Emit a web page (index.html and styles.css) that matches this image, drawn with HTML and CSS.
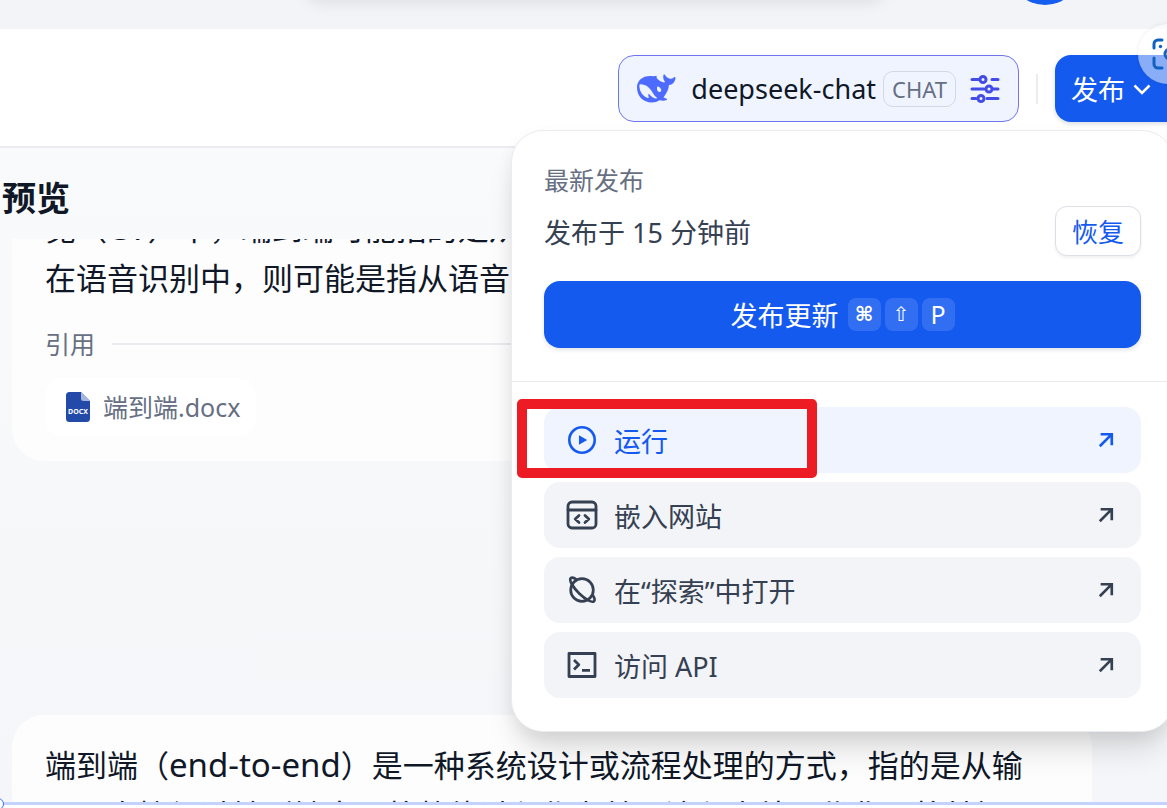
FILE: index.html
```html
<!DOCTYPE html>
<html lang="zh-CN">
<head>
    <meta charset="UTF-8">
    <meta name="viewport" content="width=device-width, initial-scale=1.0">
    <title>调试与预览</title>
    <link rel="stylesheet" href="styles.css">
</head>
<body>

<div class="topbar">
    <div class="topbar-tabs"></div>
    <div class="avatar"></div>
</div>

<header class="header">
    <button class="model" type="button">
        <svg class="model-logo" viewBox="0 0 40 32" aria-hidden="true">
            <path fill="#4d6bfe" fill-rule="evenodd" d="M39 4c-.6-.3-.9.3-1.3.6-1.2 1.3-2.800 1.500-4.400 1C31.500 5 30.300 4 29 2c-.4-.7-1-1-1.300-.4-.9 1.800-.6 4.700.9 6.600.5.7.2 1.300-.4 1.200-2.700-.3-4.700-1.600-6.700-3.400-.8-.7-1.200-1.500-.7-2.400.2-.4-.5-.7-1-.5-1.500.2-3 .2-4.500-.1C6.500 2.500 1 7.500 1 14.500 1 23 7 29.500 16 29.500c2.800 0 5.300-.8 7.400-2.200 2 .4 4.500.7 6.800 0 1.300-.5 1.200-1.200.3-1.500-1.300-.5-2.300-.8-3-1.500 3-3.600 5-7.500 5.500-12.300 3.500 0 6-3 6.500-7 .1-.5 0-.8-.5-1zM19.500 25.500c-2-.2-4-1.800-5.500-3.500-.7-.9-1.500-1.300-1.700-.6-.3 1 .8 2.600.3 3.300-.4.5-1.600.1-2.600-.4C5.500 21.500 3.400 17.500 3.400 12.500c0-.8.300-1.200 1.200-1.200 5.400.1 9.100 3.500 11.500 7.500 1.400 2.300 2.700 4.700 4.700 5.700.6.4-.2 1.100-1.300 1zM23 19c-1.800-.8-2.200-2.300-2-4.500.1-1.200 1.300-1.300 2.200-.5 1.300 1.200 2.600 2.600 1.900 4-.4 1-1.300 1.300-2.100 1z"/>
        </svg>
        <span class="model-name">deepseek-chat</span>
        <span class="model-tag">CHAT</span>
        <svg class="model-settings" viewBox="0 0 30 30" fill="none" stroke="#444ce7" stroke-width="3" stroke-linecap="round" aria-hidden="true">
            <path d="M2 5.500h7M22 5.500h6M2 15h12M23 15h5M2 24.500h4M17 24.500h11"/>
            <circle cx="13" cy="5.500" r="3"/>
            <circle cx="19" cy="15" r="3"/>
            <circle cx="11" cy="24.500" r="3"/>
        </svg>
    </button>
    <span class="header-divider"></span>
    <button class="publish" type="button">
        发布
        <svg class="publish-arrow" viewBox="0 0 18 18" fill="none" stroke="#fff" stroke-width="2.500" aria-hidden="true">
            <path d="M1.500 5.500L9 13l7.500-7.500"/>
        </svg>
    </button>

    <section class="popover">
        <div class="popover-top">
            <p class="popover-label">最新发布</p>
            <div class="popover-row">
                <span>发布于 15 分钟前</span>
                <button class="restore" type="button">恢复</button>
            </div>
            <button class="update" type="button">
                <span>发布更新</span>
                <span class="keys"><kbd>⌘</kbd><kbd>⇧</kbd><kbd>P</kbd></span>
            </button>
        </div>
        <nav class="actions">
            <a class="action active" href="#run">
                <svg class="action-icon" viewBox="0 0 32 32" fill="none" stroke="currentColor" stroke-width="2.600" aria-hidden="true">
                    <circle cx="16" cy="16" r="12.700"/>
                    <path d="M13 11.200v9.600l8.200-4.800z" fill="currentColor" stroke="none"/>
                </svg>
                <span>运行</span>
                <svg class="action-arrow" viewBox="0 0 18 18" fill="none" stroke="currentColor" stroke-width="3" aria-hidden="true"><path d="M2 16L15 3M3 2.500h12.500V15"/></svg>
            </a>
            <a class="action" href="#embed">
                <svg class="action-icon" viewBox="0 0 32 32" fill="none" stroke="currentColor" stroke-width="2.800" stroke-linecap="round" stroke-linejoin="round" aria-hidden="true">
                    <rect x="2" y="3" width="28" height="26" rx="4"/>
                    <path d="M2 11h28M13 16.500l-3.800 3.500 3.800 3.500M19 16.500l3.800 3.500-3.800 3.500"/>
                </svg>
                <span>嵌入网站</span>
                <svg class="action-arrow" viewBox="0 0 18 18" fill="none" stroke="currentColor" stroke-width="3" aria-hidden="true"><path d="M2 16L15 3M3 2.500h12.500V15"/></svg>
            </a>
            <a class="action" href="#explore">
                <svg class="action-icon" viewBox="0 0 32 32" fill="none" stroke="currentColor" stroke-width="2.700" aria-hidden="true">
                    <circle cx="16" cy="16" r="11.300"/>
                    <path d="M10.500 5.500C8 3.600 5.500 3.300 4.600 4.400 3 6.500 7 13.500 13.500 19.800 19.500 25.600 26 29 28 27.200c1-1 .5-3.500-1.500-6.500"/>
                </svg>
                <span>在“探索”中打开</span>
                <svg class="action-arrow" viewBox="0 0 18 18" fill="none" stroke="currentColor" stroke-width="3" aria-hidden="true"><path d="M2 16L15 3M3 2.500h12.500V15"/></svg>
            </a>
            <a class="action" href="#api">
                <svg class="action-icon" viewBox="0 0 32 32" fill="none" stroke="currentColor" stroke-width="2.800" stroke-linejoin="round" aria-hidden="true">
                    <rect x="3" y="4.500" width="26" height="23"/>
                    <path d="M8 11l4.800 4.800L8 20.600M16 21.300h8"/>
                </svg>
                <span>访问 API</span>
                <svg class="action-arrow" viewBox="0 0 18 18" fill="none" stroke="currentColor" stroke-width="3" aria-hidden="true"><path d="M2 16L15 3M3 2.500h12.500V15"/></svg>
            </a>
        </nav>
        <div class="highlight"></div>
    </section>
</header>

<main class="preview">
    <h1 class="preview-title"><span>调试与预览</span></h1>
    <div class="chat">
        <article class="message first">
            <p>觉（<span class="latin">CV</span>）中，端到端可能指的是从<br>在语音识别中，则可能是指从语音</p>
            <h2 class="citation">引用</h2>
            <a class="file" href="#file">
                <svg class="file-icon" viewBox="0 0 24 30" aria-hidden="true">
                    <path fill="#2349a9" d="M3.500 0H15l9 9v17.500a3.500 3.500 0 0 1-3.500 3.500h-17A3.500 3.500 0 0 1 0 26.500v-23A3.500 3.500 0 0 1 3.500 0z"/>
                    <path fill="#a7b6dd" d="M15 0l9 9h-6.500A2.500 2.500 0 0 1 15 6.500z"/>
                    <text x="12" y="22" class="file-type">DOCX</text>
                </svg>
                端到端.docx
            </a>
        </article>
        <article class="message">
            <p>端到端（<span class="latin">end-to-end</span>）是一种系统设计或流程处理的方式，指的是从输<br>入，直接经过转到输出，将整体过程作为单一流程来处理优化，将其视</p>
        </article>
    </div>
</main>

<button class="capture" type="button" aria-label="截图">
    <svg viewBox="0 0 32 32" fill="none" stroke="#0f62c0" stroke-width="3" stroke-linecap="round" aria-hidden="true">
        <path d="M2 10V6a4 4 0 0 1 4-4h4M2 20v6a4 4 0 0 0 4 4h4M22 2h4a4 4 0 0 1 4 4v4"/>
        <circle cx="18" cy="16" r="5"/>
        <circle cx="8.500" cy="8.500" r="1.700" fill="#0f62c0" stroke="none"/>
    </svg>
</button>
<div class="selection-edge"></div>

</body>
</html>
```
FILE: styles.css
```css
* {
    box-sizing: border-box;
}
body {
    margin: 0;
    height: 100vh;
    display: flex;
    flex-direction: column;
    position: relative;
    overflow: hidden;
    background-color: #f8f9fb;
    color: #101828;
    font-family: "Noto Sans", "Noto Sans CJK SC", sans-serif;
}
p, h1, h2 {
    margin: 0;
    font-weight: 400;
}
button {
    font-family: inherit;
    cursor: pointer;
}
svg {
    display: block;
    flex: none;
}

/* Top bar */
.topbar {
    flex: none;
    height: 29px;
    position: relative;
    overflow: hidden;
    background-color: #f2f4f7;
}
.topbar-tabs {
    position: absolute;
    top: -42px;
    left: 26%;
    right: 24%;
    height: 40px;
    border-radius: 20px;
    box-shadow: 0 4px 16px rgba(16, 24, 40, 0.1);
}
.avatar {
    position: absolute;
    top: -67px;
    right: 86px;
    width: 72px;
    height: 72px;
    border-radius: 50%;
    background-color: #155eef;
}

/* Header */
.header {
    flex: none;
    height: 119px;
    position: relative;
    z-index: 1;
    display: flex;
    align-items: center;
    justify-content: flex-end;
    padding-top: 2px;
    background-color: #fff;
    border-bottom: 2px solid #eaecf0;
}
.model {
    height: 67px;
    display: flex;
    align-items: center;
    padding: 0 18px 0 17px;
    border: 1px solid #6f76ed;
    border-radius: 16px;
    background-color: #eff4ff;
    color: #101828;
}
.model-logo {
    width: 40px;
    height: 32px;
    margin-right: 15px;
}
.model-name {
    font-size: 27px;
}
.model-tag {
    margin: 0 14px 0 7px;
    padding: 0 8px;
    border: 1px solid #d3d8e2;
    border-radius: 10px;
    color: #667085;
    font-size: 22px;
    line-height: 34px;
}
.model-settings {
    width: 30px;
    height: 30px;
}
.header-divider {
    width: 2px;
    height: 30px;
    margin: 0 17px;
    background-color: #eaecf0;
}
.publish {
    height: 67px;
    display: flex;
    align-items: center;
    gap: 8px;
    margin-right: -16px;
    padding: 0 32px 0 16px;
    border: 0;
    border-radius: 16px;
    background-color: #155aef;
    box-shadow: 0 2px 4px rgba(16, 24, 40, 0.15);
    color: #fff;
    font-size: 27px;
}
.publish-arrow {
    width: 18px;
    height: 18px;
}

/* Publish menu */
.popover {
    position: absolute;
    top: 101px;
    right: -7px;
    width: 663px;
    padding-bottom: 33px;
    border: 1px solid #eaecf0;
    border-radius: 32px;
    background-color: #fff;
    box-shadow: 0 24px 32px -8px rgba(0, 0, 0, 0.14), 0 6px 16px rgba(0, 0, 0, 0.06);
    color: #354052;
}
.popover-top {
    padding: 30px 32px 33px;
    border-bottom: 1px solid #eaecf0;
}
.popover-label {
    color: #676f83;
    font-size: 25px;
    line-height: 38px;
}
.popover-row {
    display: flex;
    align-items: center;
    justify-content: space-between;
    margin: 7px 0 25px;
    font-size: 27px;
}
.restore {
    height: 50px;
    padding: 0 16px;
    border: 1px solid #dcdfe5;
    border-radius: 12px;
    background-color: #fff;
    box-shadow: 0 2px 3px rgba(16, 24, 40, 0.06);
    color: #155aef;
    font-size: 26px;
}
.update {
    width: 100%;
    height: 67px;
    display: flex;
    align-items: center;
    justify-content: center;
    gap: 9px;
    border: 0;
    border-radius: 16px;
    background-color: #155aef;
    box-shadow: 0 2px 4px rgba(16, 24, 40, 0.12);
    color: #fff;
    font-size: 27px;
}
.keys {
    display: flex;
    gap: 4px;
}
kbd {
    width: 33px;
    height: 33px;
    border-radius: 8px;
    background-color: rgba(255, 255, 255, 0.12);
    font-family: "Noto Sans", "DejaVu Sans", sans-serif;
    font-size: 25px;
    line-height: 33px;
    text-align: center;
}
kbd:not(:last-child) {
    font-family: "DejaVu Sans", sans-serif;
    font-size: 20px;
}
kbd:first-child {
    font-weight: 700;
}
.actions {
    display: flex;
    flex-direction: column;
    gap: 9px;
    padding: 25px 32px 0;
}
.action {
    height: 66px;
    display: flex;
    align-items: center;
    padding: 0 27px 0 22px;
    border-radius: 16px;
    background-color: #f2f4f7;
    color: #354052;
    font-size: 27px;
    text-decoration: none;
}
.action.active {
    background-color: #eff4ff;
    color: #155aef;
}
.action-icon {
    width: 32px;
    height: 32px;
    margin-right: 16px;
}
.action-arrow {
    width: 16px;
    height: 16px;
    margin-left: auto;
}
.highlight {
    position: absolute;
    top: 268px;
    left: 5px;
    width: 300px;
    height: 79px;
    border: 10px solid #ed1c24;
    border-radius: 5px;
    pointer-events: none;
}

/* Preview */
.preview {
    flex: 1;
    min-height: 0;
    display: flex;
    flex-direction: column;
    background-image: linear-gradient(#f9fafb, #f5f6f9);
}
.preview-title {
    flex: none;
    height: 91px;
    width: 70px;
    display: flex;
    justify-content: flex-end;
    font-size: 34px;
    font-weight: 700;
    line-height: 100px;
    white-space: nowrap;
}
.chat {
    flex: 1;
    min-height: 0;
    overflow: hidden;
    padding: 0 75px 0 12px;
}
.message {
    padding: 25px 33px;
    border-radius: 32px;
    background-color: #fdfdfe;
    font-size: 31px;
    line-height: 50px;
    white-space: nowrap;
}
.message.first {
    margin: -61px 0 254px;
}
.latin {
    font-size: 33px;
    line-height: 1;
}
.citation {
    display: flex;
    align-items: center;
    gap: 17px;
    margin: 21px 0 15px;
    color: #676f83;
    font-size: 25px;
    line-height: 40px;
}
.citation::after {
    content: "";
    flex: 1;
    height: 2px;
    background-color: #e9ebee;
}
.file {
    width: fit-content;
    height: 57px;
    display: flex;
    align-items: center;
    gap: 13px;
    padding: 0 16px 2px 21px;
    border-radius: 16px;
    background-color: #fff;
    color: #676f83;
    font-size: 25px;
    text-decoration: none;
}
.file-icon {
    width: 24px;
    height: 30px;
}
.file-type {
    fill: #fff;
    font-size: 7px;
    font-weight: 700;
    text-anchor: middle;
}

/* Screen capture overlay */
.capture {
    position: absolute;
    z-index: 2;
    top: 24px;
    right: -31px;
    width: 60px;
    height: 60px;
    padding: 14px;
    border: 0;
    border-radius: 50%;
    background-color: rgba(255, 255, 255, 0.5);
    box-shadow: 0 0 4px rgba(0, 0, 0, 0.08);
}
.selection-edge {
    position: absolute;
    z-index: 2;
    left: 0;
    right: 0;
    bottom: 0;
    height: 6px;
    border-top: 3px solid #c3d3fd;
    background-color: #fff;
}
.selection-edge::before {
    content: "";
    position: absolute;
    top: -7px;
    left: -8px;
    width: 10px;
    height: 10px;
    border: 1px solid #3b6ff5;
    border-radius: 50%;
    background-color: #fff;
}
```
